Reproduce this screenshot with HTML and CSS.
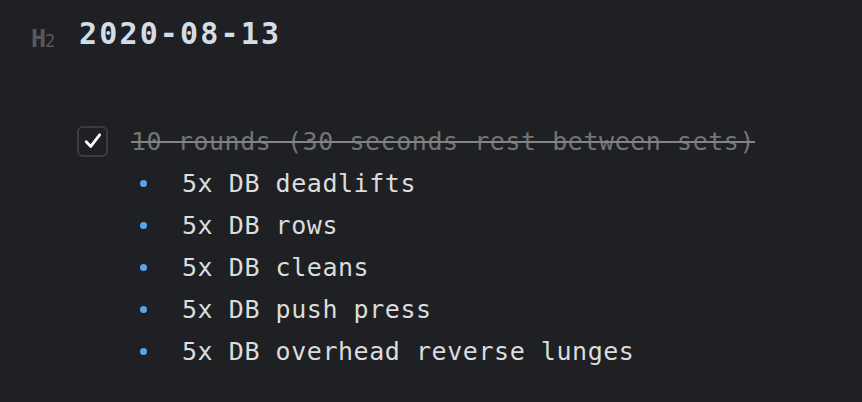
FILE: index.html
```html
<!DOCTYPE html>
<html>
<head>
<meta charset="utf-8">
<link rel="stylesheet" href="styles.css">
</head>
<body>
<div class="doc">
  <div class="heading">
    <span class="hlabel">H<span class="hnum">2</span></span>
    <h2 class="htext">2020-08-13</h2>
  </div>
  <ul class="tasks">
    <li class="task done">
      <span class="checkbox">
        <svg width="20" height="20" viewBox="0 0 20 20"><path d="M3.2 10.8 L7.8 15.4 L16.6 3.8" fill="none" stroke="#ffffff" stroke-width="2.8" stroke-linecap="round" stroke-linejoin="round"/></svg>
      </span>
      <span class="ttext">10 rounds (30 seconds rest between sets)</span>
    </li>
  </ul>
  <ul class="bullets">
    <li class="item"><span class="dot"></span><span class="itext">5x DB deadlifts</span></li>
    <li class="item"><span class="dot"></span><span class="itext">5x DB rows</span></li>
    <li class="item"><span class="dot"></span><span class="itext">5x DB cleans</span></li>
    <li class="item"><span class="dot"></span><span class="itext">5x DB push press</span></li>
    <li class="item"><span class="dot"></span><span class="itext">5x DB overhead reverse lunges</span></li>
  </ul>
</div>
</body>
</html>
```

FILE: styles.css
```css
html, body {
  margin: 0;
  padding: 0;
  background: #1f2023;
  height: 100%;
}
.doc {
  padding: 9px 0 0 31px;
  font-family: "DejaVu Sans Mono", monospace;
  color: #d9d9d9;
}
.heading {
  display: flex;
  align-items: baseline;
  height: 50px;
}
.hlabel {
  width: 48px;
  font-size: 25px;
  font-weight: bold;
  color: #58595c;
  letter-spacing: -1px;
  transform: translateY(3px);
}
.hnum {
  font-size: 17px;
  font-weight: normal;
  letter-spacing: 0;
}
.htext {
  margin: 0;
  font-size: 30px;
  font-weight: bold;
  letter-spacing: 2.15px;
  color: #d3dde6;
  line-height: 50px;
}
ul {
  list-style: none;
  margin: 0;
  padding: 0;
}
.tasks {
  margin-top: 61px;
  padding-left: 46px;
}
.task {
  display: flex;
  align-items: center;
  height: 42px;
}
.checkbox {
  width: 27px;
  height: 27px;
  border: 2px solid #3b3c40;
  border-radius: 6px;
  display: flex;
  align-items: center;
  justify-content: center;
  margin-right: 23px;
}
.ttext {
  font-size: 25px;
  letter-spacing: 0.55px;
  color: #737476;
  text-decoration: line-through;
  text-decoration-color: #838486;
  text-decoration-thickness: 2px;
}
.bullets {
  padding-left: 109px;
}
.item {
  display: flex;
  align-items: center;
  height: 42px;
}
.dot {
  width: 7px;
  height: 7px;
  border-radius: 50%;
  background: #5aa2f5;
  margin-right: 35px;
}
.itext {
  font-size: 25px;
  letter-spacing: 0.55px;
  color: #dcdcdc;
}
```
